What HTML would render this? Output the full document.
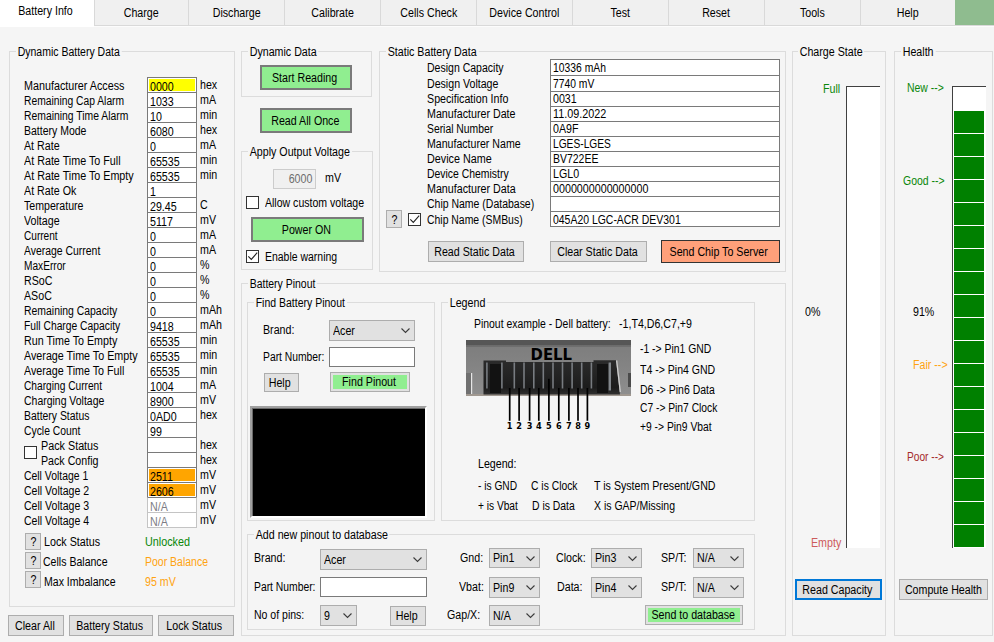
<!DOCTYPE html>
<html><head><meta charset="utf-8"><title>Battery Info</title>
<style>
html,body{margin:0;padding:0}
body{width:994px;height:642px;overflow:hidden;background:#f5f5f5;position:relative;font-family:"Liberation Sans",sans-serif;font-size:12.3px;color:#000}
body>*{position:absolute;box-sizing:content-box}
.t{line-height:13px;white-space:pre;font-size:12.3px;transform:scaleX(.867);transform-origin:0 50%}
.t.v{font-size:12.3px;transform:scaleX(.867)}
span{display:inline-block;white-space:nowrap}
.btn,.gbtn,.sbtn,.fbtn,.tab{white-space:nowrap}
.tab span,.btn span,.gbtn span,.sbtn span,.fbtn span{font-size:12.3px;transform:scaleX(.867)}
.cb span{font-size:12.3px;transform:scaleX(.867);transform-origin:0 50%}
.tbd span{transform:scaleX(.867);transform-origin:100% 50%}
.gt{background:#f5f5f5;padding:0 2px 0 2px}
.gb{border:1px solid #dcdcdc}
.tabbar{left:0;top:0;width:994px;height:26px;background:#f5f5f5}
.tab{background:#f0f0f0;border-left:1px solid #d9d9d9;border-bottom:1px solid #d9d9d9;text-align:center;line-height:26px;box-sizing:border-box}
.tab.sel{background:#fff;border:none;line-height:22px}
.tab.sel span{left:-2px;position:relative}
.tb{border:1px solid #7a7a7a;background:#fff}
.tbx{border:1px solid #7a7a7a;background:#fff}
.tbd{border:1px solid #ccc;background:#f0f0f0;color:#6d6d6d;text-align:right;padding-right:3px}
.btn{background:#e1e1e1;border:1px solid #adadad;box-sizing:border-box;text-align:center}
.btn span,.gbtn span,.sbtn span,.fbtn span{position:relative;top:0px;left:-1.5px}
.btn.q{background:#e1e1e1}
.btn.q span{left:0}
.btn.foc{border:2px solid #0078d7}
.btn.foc span{top:-1px}
.gbtn{background:#90ee90;border:2px solid #7a7a7a;box-sizing:border-box;text-align:center}
.gbtn span{top:-1px;left:-1px}
.fbtn span{top:-1px}
.sbtn{background:#ffa07a;border:1px solid #333;box-sizing:border-box;text-align:center}
.fbtn{background:#90ee90;border:1px solid #adadad;box-shadow:inset 0 0 0 2px #e1e1e1;box-sizing:border-box;text-align:center}
.cb{background:#e1e1e1;border:1px solid #adadad;box-sizing:border-box;padding-left:3px}
.cb span{position:relative;top:0px}
.cb svg{position:absolute;right:4px;top:7px}
.blk{background:#000;border:2px solid;border-color:#a0a0a0 #fff #fff #a0a0a0;box-shadow:inset 1px 1px 0 #696969}
.bar{background:#fff;border-top:1px solid #404040;border-left:1px solid #404040}
.ck{width:11px;height:11px;border:1px solid #333;background:#fff}
.ck svg{position:absolute;left:-1px;top:-1px}
</style></head>
<body>
<div class="tabbar"></div>
<div class="tab sel" style="left:0;top:0;width:94px;height:27px;"><span>Battery Info</span></div>
<div class="tab" style="left:94px;top:0;width:94px;height:26px;"><span>Charge</span></div>
<div class="tab" style="left:188px;top:0;width:96px;height:26px;"><span>Discharge</span></div>
<div class="tab" style="left:284px;top:0;width:96px;height:26px;"><span>Calibrate</span></div>
<div class="tab" style="left:380px;top:0;width:96px;height:26px;"><span>Cells Check</span></div>
<div class="tab" style="left:476px;top:0;width:96px;height:26px;"><span>Device Control</span></div>
<div class="tab" style="left:572px;top:0;width:96px;height:26px;"><span>Test</span></div>
<div class="tab" style="left:668px;top:0;width:96px;height:26px;"><span>Reset</span></div>
<div class="tab" style="left:764px;top:0;width:96px;height:26px;"><span>Tools</span></div>
<div class="tab" style="left:860px;top:0;width:95px;height:26px;"><span>Help</span></div>
<div style="left:955px;top:0;width:39px;height:25px;background:#8fbc8f;border-bottom:1px solid #d9d9d9"></div>
<div style="left:94px;top:26px;width:900px;height:1px;background:#fcfcfc"></div>
<div class="gb" style="left:9px;top:51px;width:224px;height:554px"></div>
<span class="t gt" style="left:16px;top:46px;transform:scaleX(0.853);">Dynamic Battery Data</span>
<span class="t " style="left:23.5px;top:80px;transform:scaleX(0.8752);">Manufacturer Access</span>
<div class="tb" style="left:147px;top:77px;width:48px;height:14px;border-color:#7a7a7a"></div>
<div style="left:149px;top:79px;width:46px;height:12px;background:#ffff00"></div>
<span class="t v" style="left:150px;top:81px;">0000</span>
<span class="t " style="left:200px;top:79px;">hex</span>
<span class="t " style="left:23.5px;top:95px;transform:scaleX(0.8369);">Remaining Cap Alarm</span>
<div class="tb" style="left:147px;top:92px;width:48px;height:14px;border-color:#7a7a7a"></div>
<span class="t v" style="left:150px;top:96px;">1033</span>
<span class="t " style="left:200px;top:94px;">mA</span>
<span class="t " style="left:23.5px;top:110px;transform:scaleX(0.8431);">Remaining Time Alarm</span>
<div class="tb" style="left:147px;top:107px;width:48px;height:14px;border-color:#7a7a7a"></div>
<span class="t v" style="left:150px;top:111px;">10</span>
<span class="t " style="left:200px;top:109px;">min</span>
<span class="t " style="left:23.5px;top:125px;transform:scaleX(0.8532);">Battery Mode</span>
<div class="tb" style="left:147px;top:122px;width:48px;height:14px;border-color:#7a7a7a"></div>
<span class="t v" style="left:150px;top:126px;">6080</span>
<span class="t " style="left:200px;top:124px;">hex</span>
<span class="t " style="left:23.5px;top:140px;transform:scaleX(0.8680);">At Rate</span>
<div class="tb" style="left:147px;top:137px;width:48px;height:14px;border-color:#7a7a7a"></div>
<span class="t v" style="left:150px;top:141px;">0</span>
<span class="t " style="left:200px;top:139px;">mA</span>
<span class="t " style="left:23.5px;top:155px;transform:scaleX(0.8742);">At Rate Time To Full</span>
<div class="tb" style="left:147px;top:152px;width:48px;height:14px;border-color:#7a7a7a"></div>
<span class="t v" style="left:150px;top:156px;">65535</span>
<span class="t " style="left:200px;top:154px;">min</span>
<span class="t " style="left:23.5px;top:170px;transform:scaleX(0.8739);">At Rate Time To Empty</span>
<div class="tb" style="left:147px;top:167px;width:48px;height:14px;border-color:#7a7a7a"></div>
<span class="t v" style="left:150px;top:171px;">65535</span>
<span class="t " style="left:200px;top:169px;">min</span>
<span class="t " style="left:23.5px;top:185px;transform:scaleX(0.8696);">At Rate Ok</span>
<div class="tb" style="left:147px;top:182px;width:48px;height:14px;border-color:#7a7a7a"></div>
<span class="t v" style="left:150px;top:186px;">1</span>
<span class="t " style="left:23.5px;top:200px;transform:scaleX(0.8617);">Temperature</span>
<div class="tb" style="left:147px;top:197px;width:48px;height:14px;border-color:#7a7a7a"></div>
<span class="t v" style="left:150px;top:201px;">29.45</span>
<span class="t " style="left:200px;top:199px;">C</span>
<span class="t " style="left:23.5px;top:215px;transform:scaleX(0.8676);">Voltage</span>
<div class="tb" style="left:147px;top:212px;width:48px;height:14px;border-color:#7a7a7a"></div>
<span class="t v" style="left:150px;top:216px;">5117</span>
<span class="t " style="left:200px;top:214px;">mV</span>
<span class="t " style="left:23.5px;top:230px;transform:scaleX(0.8200);">Current</span>
<div class="tb" style="left:147px;top:227px;width:48px;height:14px;border-color:#7a7a7a"></div>
<span class="t v" style="left:150px;top:231px;">0</span>
<span class="t " style="left:200px;top:229px;">mA</span>
<span class="t " style="left:23.5px;top:245px;transform:scaleX(0.8478);">Average Current</span>
<div class="tb" style="left:147px;top:242px;width:48px;height:14px;border-color:#7a7a7a"></div>
<span class="t v" style="left:150px;top:246px;">0</span>
<span class="t " style="left:200px;top:244px;">mA</span>
<span class="t " style="left:23.5px;top:260px;transform:scaleX(0.8247);">MaxError</span>
<div class="tb" style="left:147px;top:257px;width:48px;height:14px;border-color:#7a7a7a"></div>
<span class="t v" style="left:150px;top:261px;">0</span>
<span class="t " style="left:200px;top:259px;">%</span>
<span class="t " style="left:23.5px;top:275px;">RSoC</span>
<div class="tb" style="left:147px;top:272px;width:48px;height:14px;border-color:#7a7a7a"></div>
<span class="t v" style="left:150px;top:276px;">0</span>
<span class="t " style="left:200px;top:274px;">%</span>
<span class="t " style="left:23.5px;top:290px;">ASoC</span>
<div class="tb" style="left:147px;top:287px;width:48px;height:14px;border-color:#7a7a7a"></div>
<span class="t v" style="left:150px;top:291px;">0</span>
<span class="t " style="left:200px;top:289px;">%</span>
<span class="t " style="left:23.5px;top:305px;transform:scaleX(0.8478);">Remaining Capacity</span>
<div class="tb" style="left:147px;top:302px;width:48px;height:14px;border-color:#7a7a7a"></div>
<span class="t v" style="left:150px;top:306px;">0</span>
<span class="t " style="left:200px;top:304px;">mAh</span>
<span class="t " style="left:23.5px;top:320px;transform:scaleX(0.8378);">Full Charge Capacity</span>
<div class="tb" style="left:147px;top:317px;width:48px;height:14px;border-color:#7a7a7a"></div>
<span class="t v" style="left:150px;top:321px;">9418</span>
<span class="t " style="left:200px;top:319px;">mAh</span>
<span class="t " style="left:23.5px;top:335px;transform:scaleX(0.8713);">Run Time To Empty</span>
<div class="tb" style="left:147px;top:332px;width:48px;height:14px;border-color:#7a7a7a"></div>
<span class="t v" style="left:150px;top:336px;">65535</span>
<span class="t " style="left:200px;top:334px;">min</span>
<span class="t " style="left:23.5px;top:350px;transform:scaleX(0.8732);">Average Time To Empty</span>
<div class="tb" style="left:147px;top:347px;width:48px;height:14px;border-color:#7a7a7a"></div>
<span class="t v" style="left:150px;top:351px;">65535</span>
<span class="t " style="left:200px;top:349px;">min</span>
<span class="t " style="left:23.5px;top:365px;transform:scaleX(0.8717);">Average Time To Full</span>
<div class="tb" style="left:147px;top:362px;width:48px;height:14px;border-color:#7a7a7a"></div>
<span class="t v" style="left:150px;top:366px;">65535</span>
<span class="t " style="left:200px;top:364px;">min</span>
<span class="t " style="left:23.5px;top:380px;transform:scaleX(0.8280);">Charging Current</span>
<div class="tb" style="left:147px;top:377px;width:48px;height:14px;border-color:#7a7a7a"></div>
<span class="t v" style="left:150px;top:381px;">1004</span>
<span class="t " style="left:200px;top:379px;">mA</span>
<span class="t " style="left:23.5px;top:395px;transform:scaleX(0.8510);">Charging Voltage</span>
<div class="tb" style="left:147px;top:392px;width:48px;height:14px;border-color:#7a7a7a"></div>
<span class="t v" style="left:150px;top:396px;">8900</span>
<span class="t " style="left:200px;top:394px;">mV</span>
<span class="t " style="left:23.5px;top:410px;transform:scaleX(0.8468);">Battery Status</span>
<div class="tb" style="left:147px;top:407px;width:48px;height:14px;border-color:#7a7a7a"></div>
<span class="t v" style="left:150px;top:411px;">0AD0</span>
<span class="t " style="left:200px;top:409px;">hex</span>
<span class="t " style="left:23.5px;top:425px;transform:scaleX(0.8435);">Cycle Count</span>
<div class="tb" style="left:147px;top:422px;width:48px;height:14px;border-color:#7a7a7a"></div>
<span class="t v" style="left:150px;top:426px;">99</span>
<span class="t " style="left:40.5px;top:440px;transform:scaleX(0.8762);">Pack Status</span>
<div class="tb" style="left:147px;top:437px;width:48px;height:14px;border-color:#7a7a7a"></div>
<span class="t " style="left:200px;top:439px;">hex</span>
<span class="t " style="left:40.5px;top:455px;transform:scaleX(0.8671);">Pack Config</span>
<div class="tb" style="left:147px;top:452px;width:48px;height:14px;border-color:#7a7a7a"></div>
<span class="t " style="left:200px;top:454px;">hex</span>
<span class="t " style="left:23.5px;top:470px;transform:scaleX(0.8460);">Cell Voltage 1</span>
<div class="tb" style="left:147px;top:467px;width:48px;height:14px;border-color:#7a7a7a"></div>
<div style="left:149px;top:469px;width:46px;height:12px;background:#ffa500"></div>
<span class="t v" style="left:150px;top:471px;">2511</span>
<span class="t " style="left:200px;top:469px;">mV</span>
<span class="t " style="left:23.5px;top:485px;transform:scaleX(0.8578);">Cell Voltage 2</span>
<div class="tb" style="left:147px;top:482px;width:48px;height:14px;border-color:#7a7a7a"></div>
<div style="left:149px;top:484px;width:46px;height:12px;background:#ffa500"></div>
<span class="t v" style="left:150px;top:486px;">2606</span>
<span class="t " style="left:200px;top:484px;">mV</span>
<span class="t " style="left:23.5px;top:500px;transform:scaleX(0.8578);">Cell Voltage 3</span>
<div class="tb" style="left:147px;top:497px;width:48px;height:14px;border-color:#7a7a7a #c4c4c4 #c4c4c4"></div>
<span class="t v" style="left:150px;top:501px;color:#7c7c84;">N/A</span>
<span class="t " style="left:200px;top:499px;">mV</span>
<span class="t " style="left:23.5px;top:515px;transform:scaleX(0.8578);">Cell Voltage 4</span>
<div class="tb" style="left:147px;top:512px;width:48px;height:14px;border-color:#c4c4c4"></div>
<span class="t v" style="left:150px;top:516px;color:#7c7c84;">N/A</span>
<span class="t " style="left:200px;top:514px;">mV</span>
<div class="ck" style="left:24px;top:446px;"></div>
<div class="btn q" style="left:25px;top:533px;width:16px;height:17px;line-height:17px;"><span>?</span></div>
<span class="t " style="left:44px;top:536px;transform:scaleX(0.8729);">Lock Status</span>
<span class="t " style="left:145px;top:536px;color:#0a870a;transform:scaleX(0.8778);">Unlocked</span>
<div class="btn q" style="left:25px;top:552px;width:16px;height:17px;line-height:17px;"><span>?</span></div>
<span class="t " style="left:42.5px;top:556px;transform:scaleX(0.8579);">Cells Balance</span>
<span class="t " style="left:145px;top:556px;color:#ffa311;transform:scaleX(0.8532);">Poor Balance</span>
<div class="btn q" style="left:25px;top:571px;width:16px;height:17px;line-height:17px;"><span>?</span></div>
<span class="t " style="left:43.5px;top:576px;transform:scaleX(0.8574);">Max Imbalance</span>
<span class="t " style="left:145px;top:576px;color:#ffa311;">95 mV</span>
<div class="btn" style="left:8px;top:615px;width:56px;height:21px;line-height:21px;"><span>Clear All</span></div>
<div class="btn" style="left:69px;top:615px;width:84px;height:21px;line-height:21px;"><span>Battery Status</span></div>
<div class="btn" style="left:158px;top:615px;width:76px;height:21px;line-height:21px;"><span>Lock Status</span></div>
<div class="gb" style="left:241px;top:51px;width:129px;height:44px"></div>
<span class="t gt" style="left:248px;top:46px;">Dynamic Data</span>
<div class="gbtn" style="left:260px;top:65px;width:92px;height:25px;line-height:25px;"><span>Start Reading</span></div>
<div class="gbtn" style="left:260px;top:108px;width:92px;height:25px;line-height:25px;"><span>Read All Once</span></div>
<div class="gb" style="left:241px;top:151px;width:130px;height:117px"></div>
<span class="t gt" style="left:248px;top:146px;">Apply Output Voltage</span>
<div class="tbd" style="left:273px;top:169px;width:38px;height:18px;line-height:18px;"><span>6000</span></div>
<span class="t " style="left:325px;top:172px;">mV</span>
<div class="ck" style="left:246px;top:196px;"></div>
<span class="t " style="left:265px;top:197px;transform:scaleX(0.8570);">Allow custom voltage</span>
<div class="gbtn" style="left:251px;top:217px;width:113px;height:25px;line-height:25px;"><span>Power ON</span></div>
<div class="ck" style="left:246px;top:250px;"><svg width="13" height="13" viewBox="0 0 13 13"><path d="M2.3 6.3 L5.3 9.4 L11.2 2.7" fill="none" stroke="#222" stroke-width="1.1"/></svg></div>
<span class="t " style="left:265px;top:251px;transform:scaleX(0.8504);">Enable warning</span>
<div class="gb" style="left:379px;top:51px;width:405px;height:219px"></div>
<span class="t gt" style="left:386px;top:46px;">Static Battery Data</span>
<span class="t " style="left:426.5px;top:62px;transform:scaleX(0.8554);">Design Capacity</span>
<div class="tb" style="left:550px;top:59px;width:228px;height:15px;"></div>
<span class="t v" style="left:553px;top:62px;transform:scaleX(0.8409);">10336 mAh</span>
<span class="t " style="left:426.5px;top:78px;transform:scaleX(0.8630);">Design Voltage</span>
<div class="tb" style="left:550px;top:75px;width:228px;height:15px;"></div>
<span class="t v" style="left:553px;top:78px;transform:scaleX(0.8391);">7740 mV</span>
<span class="t " style="left:426.5px;top:93px;transform:scaleX(0.8691);">Specification Info</span>
<div class="tb" style="left:550px;top:91px;width:228px;height:14px;"></div>
<span class="t v" style="left:553px;top:93px;">0031</span>
<span class="t " style="left:426.5px;top:108px;transform:scaleX(0.8690);">Manufacturer Date</span>
<div class="tb" style="left:550px;top:106px;width:228px;height:14px;"></div>
<span class="t v" style="left:553px;top:108px;transform:scaleX(0.8789);">11.09.2022</span>
<span class="t " style="left:426.5px;top:123px;transform:scaleX(0.8423);">Serial Number</span>
<div class="tb" style="left:550px;top:121px;width:228px;height:14px;"></div>
<span class="t v" style="left:553px;top:123px;">0A9F</span>
<span class="t " style="left:426.5px;top:138px;transform:scaleX(0.8613);">Manufacturer Name</span>
<div class="tb" style="left:550px;top:136px;width:228px;height:14px;"></div>
<span class="t v" style="left:553px;top:138px;transform:scaleX(0.8305);">LGES-LGES</span>
<span class="t " style="left:426.5px;top:153px;transform:scaleX(0.8765);">Device Name</span>
<div class="tb" style="left:550px;top:151px;width:228px;height:14px;"></div>
<span class="t v" style="left:553px;top:153px;transform:scaleX(0.8513);">BV722EE</span>
<span class="t " style="left:426.5px;top:168px;transform:scaleX(0.8468);">Device Chemistry</span>
<div class="tb" style="left:550px;top:166px;width:228px;height:14px;"></div>
<span class="t v" style="left:553px;top:168px;">LGL0</span>
<span class="t " style="left:426.5px;top:183px;transform:scaleX(0.8700);">Manufacturer Data</span>
<div class="tb" style="left:550px;top:181px;width:228px;height:14px;"></div>
<span class="t v" style="left:553px;top:183px;transform:scaleX(0.8717);">0000000000000000</span>
<span class="t " style="left:426.5px;top:198px;transform:scaleX(0.8524);">Chip Name (Database)</span>
<div class="tb" style="left:550px;top:196px;width:228px;height:14px;"></div>
<span class="t " style="left:426.5px;top:214px;transform:scaleX(0.8479);">Chip Name (SMBus)</span>
<div class="tb" style="left:550px;top:211px;width:228px;height:14px;"></div>
<span class="t v" style="left:553px;top:214px;transform:scaleX(0.8492);">045A20 LGC-ACR DEV301</span>
<div class="btn q" style="left:386px;top:210px;width:16px;height:18px;line-height:18px;"><span>?</span></div>
<div class="ck" style="left:408px;top:213px;"><svg width="13" height="13" viewBox="0 0 13 13"><path d="M2.3 6.3 L5.3 9.4 L11.2 2.7" fill="none" stroke="#222" stroke-width="1.1"/></svg></div>
<div class="btn" style="left:428px;top:241px;width:96px;height:21px;line-height:21px;"><span>Read Static Data</span></div>
<div class="btn" style="left:550px;top:241px;width:97px;height:21px;line-height:21px;"><span>Clear Static Data</span></div>
<div class="sbtn" style="left:661px;top:240px;width:119px;height:23px;line-height:23px;"><span>Send Chip To Server</span></div>
<div class="gb" style="left:241px;top:283px;width:543px;height:351px"></div>
<span class="t gt" style="left:248px;top:278px;transform:scaleX(0.85);">Battery Pinout</span>
<div class="gb" style="left:247px;top:302px;width:186px;height:217px"></div>
<span class="t gt" style="left:254px;top:297px;transform:scaleX(0.853);">Find Battery Pinout</span>
<span class="t " style="left:263px;top:324px;">Brand:</span>
<div class="cb" style="left:329px;top:320px;width:86px;height:21px;line-height:21px;"><span style="top:0px">Acer</span><svg width="9" height="6" viewBox="0 0 9 6"><path d="M0.5 0.5 L4.5 4.5 L8.5 0.5" fill="none" stroke="#3c3c3c" stroke-width="1.1"/></svg></div>
<span class="t " style="left:263px;top:351px;transform:scaleX(0.8397);">Part Number:</span>
<div class="tbx" style="left:329px;top:347px;width:84px;height:18px;"></div>
<div class="btn" style="left:264px;top:373px;width:35px;height:19px;line-height:19px;"><span>Help</span></div>
<div class="fbtn" style="left:330px;top:372px;width:80px;height:20px;line-height:20px;text-indent:1px"><span>Find Pinout</span></div>
<div class="blk" style="left:250px;top:406px;width:173px;height:108px;"></div>
<div class="gb" style="left:441px;top:302px;width:312px;height:217px"></div>
<span class="t gt" style="left:448px;top:297px;">Legend</span>
<span class="t " style="left:474px;top:318px;transform:scaleX(0.8474);">Pinout example - Dell battery:</span>
<span class="t " style="left:619px;top:318px;transform:scaleX(0.8647);">-1,T4,D6,C7,+9</span>
<span class="t " style="left:640px;top:343px;transform:scaleX(0.8435);">-1 -&gt; Pin1 GND</span>
<span class="t " style="left:640px;top:364px;transform:scaleX(0.8562);">T4 -&gt; Pin4 GND</span>
<span class="t " style="left:640px;top:384px;transform:scaleX(0.8515);">D6 -&gt; Pin6 Data</span>
<span class="t " style="left:640px;top:402px;transform:scaleX(0.8347);">C7 -&gt; Pin7 Clock</span>
<span class="t " style="left:640px;top:421px;transform:scaleX(0.8377);">+9 -&gt; Pin9 Vbat</span>
<span class="t " style="left:478px;top:458px;transform:scaleX(0.8661);">Legend:</span>
<span class="t " style="left:478px;top:480px;transform:scaleX(0.8294);">- is GND</span>
<span class="t " style="left:531px;top:480px;transform:scaleX(0.8402);">C is Clock</span>
<span class="t " style="left:594px;top:480px;transform:scaleX(0.8645);">T is System Present/GND</span>
<span class="t " style="left:478px;top:500px;transform:scaleX(0.8257);">+ is Vbat</span>
<span class="t " style="left:532px;top:500px;transform:scaleX(0.8462);">D is Data</span>
<span class="t " style="left:594px;top:500px;transform:scaleX(0.8528);">X is GAP/Missing</span>
<svg class="dell" style="left:466px;top:340px" width="166" height="94" viewBox="0 0 166 94">
<defs><linearGradient id="pl" x1="0" y1="0" x2="0" y2="1"><stop offset="0" stop-color="#7c7c7c"/><stop offset="0.5" stop-color="#848484"/><stop offset="1" stop-color="#8f8f8f"/></linearGradient><linearGradient id="cn" x1="0" y1="0" x2="0" y2="1"><stop offset="0" stop-color="#2b2b2b"/><stop offset="0.8" stop-color="#1c1c1c"/><stop offset="1" stop-color="#303030"/></linearGradient></defs>
<rect x="0" y="0" width="165" height="56" fill="url(#pl)"/>
<rect x="0" y="0" width="165" height="5.5" fill="#565656"/>
<rect x="0" y="5.5" width="165" height="1.5" fill="#6e6e6e"/>
<rect x="0" y="33" width="5" height="21" fill="#707070"/><rect x="5" y="33" width="1.2" height="21" fill="#e6e6e6"/>
<rect x="162" y="33" width="3" height="14" fill="#4a4a4a"/>
<rect x="0" y="54" width="165" height="2" fill="#a09890"/>
<path d="M17.5 20.5 H40 V22 H127.5 V20.3 H150 L154 54.5 H17.5 Z" fill="url(#cn)"/>
<path d="M150 20.5 L151.3 20.5 L155 52 L153.7 52 Z" fill="#cfcfcf"/>
<rect x="24" y="24" width="11" height="29" fill="#121212"/><rect x="131" y="24" width="11" height="29" fill="#121212"/>
<rect x="20.1" y="22.5" width="1.6" height="26" fill="#878c92" opacity="0.85"/>
<rect x="35.1" y="22.5" width="1.6" height="26" fill="#878c92" opacity="0.85"/>
<rect x="47.5" y="22.5" width="1.6" height="26" fill="#878c92" opacity="0.85"/>
<rect x="57.2" y="22.5" width="1.6" height="26" fill="#878c92" opacity="0.85"/>
<rect x="67.0" y="22.5" width="1.6" height="26" fill="#878c92" opacity="0.85"/>
<rect x="76.5" y="22.5" width="1.6" height="26" fill="#878c92" opacity="0.85"/>
<rect x="86.2" y="22.5" width="1.6" height="26" fill="#878c92" opacity="0.85"/>
<rect x="95.7" y="22.5" width="1.6" height="26" fill="#878c92" opacity="0.85"/>
<rect x="105.3" y="22.5" width="1.6" height="26" fill="#878c92" opacity="0.85"/>
<rect x="114.9" y="22.5" width="1.6" height="26" fill="#878c92" opacity="0.85"/>
<rect x="124.6" y="22.5" width="1.6" height="26" fill="#878c92" opacity="0.85"/>
<rect x="142.6" y="22.5" width="2.4" height="28" fill="#8d9298" opacity="0.9"/>
<text x="85.3" y="19.7" text-anchor="middle" font-family="'DejaVu Sans','Liberation Sans',sans-serif" font-weight="bold" font-size="16.4px" fill="#000" textLength="41.5" lengthAdjust="spacingAndGlyphs">DELL</text>
<rect x="42.85" y="48" width="1.7" height="32.8" fill="#000"/>
<rect x="52.25" y="48" width="1.7" height="32.8" fill="#000"/>
<rect x="62.75" y="48" width="1.7" height="32.8" fill="#000"/>
<rect x="71.95" y="48" width="1.7" height="32.8" fill="#000"/>
<rect x="82.05" y="38.8" width="1.7" height="42.0" fill="#000"/>
<rect x="91.95" y="48" width="1.7" height="32.8" fill="#000"/>
<rect x="102.05" y="48" width="1.7" height="32.8" fill="#000"/>
<rect x="111.15" y="48" width="1.7" height="32.8" fill="#000"/>
<rect x="120.55" y="48" width="1.7" height="32.8" fill="#000"/>
<text x="43.7" y="89" text-anchor="middle" font-family="'DejaVu Sans','Liberation Sans',sans-serif" font-weight="bold" font-size="8.2px" fill="#000">1</text>
<text x="53.1" y="89" text-anchor="middle" font-family="'DejaVu Sans','Liberation Sans',sans-serif" font-weight="bold" font-size="8.2px" fill="#000">2</text>
<text x="63.6" y="89" text-anchor="middle" font-family="'DejaVu Sans','Liberation Sans',sans-serif" font-weight="bold" font-size="8.2px" fill="#000">3</text>
<text x="72.8" y="89" text-anchor="middle" font-family="'DejaVu Sans','Liberation Sans',sans-serif" font-weight="bold" font-size="8.2px" fill="#000">4</text>
<text x="82.9" y="89" text-anchor="middle" font-family="'DejaVu Sans','Liberation Sans',sans-serif" font-weight="bold" font-size="8.2px" fill="#000">5</text>
<text x="92.8" y="89" text-anchor="middle" font-family="'DejaVu Sans','Liberation Sans',sans-serif" font-weight="bold" font-size="8.2px" fill="#000">6</text>
<text x="102.9" y="89" text-anchor="middle" font-family="'DejaVu Sans','Liberation Sans',sans-serif" font-weight="bold" font-size="8.2px" fill="#000">7</text>
<text x="112.0" y="89" text-anchor="middle" font-family="'DejaVu Sans','Liberation Sans',sans-serif" font-weight="bold" font-size="8.2px" fill="#000">8</text>
<text x="121.4" y="89" text-anchor="middle" font-family="'DejaVu Sans','Liberation Sans',sans-serif" font-weight="bold" font-size="8.2px" fill="#000">9</text>
</svg>
<div class="gb" style="left:247px;top:534px;width:506px;height:94px"></div>
<span class="t gt" style="left:254px;top:529px;">Add new pinout to database</span>
<span class="t " style="left:254px;top:552px;">Brand:</span>
<div class="cb" style="left:320px;top:549px;width:107px;height:21px;line-height:21px;"><span style="top:0px">Acer</span><svg width="9" height="6" viewBox="0 0 9 6"><path d="M0.5 0.5 L4.5 4.5 L8.5 0.5" fill="none" stroke="#3c3c3c" stroke-width="1.1"/></svg></div>
<span class="t " style="left:254px;top:581px;transform:scaleX(0.8410);">Part Number:</span>
<div class="tbx" style="left:320px;top:577px;width:105px;height:18px;"></div>
<span class="t " style="left:254px;top:609px;transform:scaleX(0.8555);">No of pins:</span>
<div class="cb" style="left:320px;top:605px;width:37px;height:21px;line-height:21px;"><span style="top:0px">9</span><svg width="9" height="6" viewBox="0 0 9 6"><path d="M0.5 0.5 L4.5 4.5 L8.5 0.5" fill="none" stroke="#3c3c3c" stroke-width="1.1"/></svg></div>
<div class="btn" style="left:390px;top:606px;width:36px;height:20px;line-height:20px;line-height:18px"><span>Help</span></div>
<span class="t " style="left:460px;top:552px;">Gnd:</span>
<div class="cb" style="left:489px;top:548px;width:51px;height:20px;line-height:20px;"><span style="top:-1px">Pin1</span><svg width="9" height="6" viewBox="0 0 9 6"><path d="M0.5 0.5 L4.5 4.5 L8.5 0.5" fill="none" stroke="#3c3c3c" stroke-width="1.1"/></svg></div>
<span class="t " style="left:459px;top:581px;">Vbat:</span>
<div class="cb" style="left:489px;top:577px;width:51px;height:21px;line-height:21px;"><span style="top:0px">Pin9</span><svg width="9" height="6" viewBox="0 0 9 6"><path d="M0.5 0.5 L4.5 4.5 L8.5 0.5" fill="none" stroke="#3c3c3c" stroke-width="1.1"/></svg></div>
<span class="t " style="left:447px;top:609px;">Gap/X:</span>
<div class="cb" style="left:489px;top:605px;width:51px;height:21px;line-height:21px;"><span style="top:0px">N/A</span><svg width="9" height="6" viewBox="0 0 9 6"><path d="M0.5 0.5 L4.5 4.5 L8.5 0.5" fill="none" stroke="#3c3c3c" stroke-width="1.1"/></svg></div>
<span class="t " style="left:556px;top:552px;">Clock:</span>
<div class="cb" style="left:591px;top:548px;width:51px;height:20px;line-height:20px;"><span style="top:-1px">Pin3</span><svg width="9" height="6" viewBox="0 0 9 6"><path d="M0.5 0.5 L4.5 4.5 L8.5 0.5" fill="none" stroke="#3c3c3c" stroke-width="1.1"/></svg></div>
<span class="t " style="left:557px;top:581px;">Data:</span>
<div class="cb" style="left:591px;top:577px;width:51px;height:21px;line-height:21px;"><span style="top:0px">Pin4</span><svg width="9" height="6" viewBox="0 0 9 6"><path d="M0.5 0.5 L4.5 4.5 L8.5 0.5" fill="none" stroke="#3c3c3c" stroke-width="1.1"/></svg></div>
<span class="t " style="left:661px;top:552px;">SP/T:</span>
<div class="cb" style="left:693px;top:548px;width:51px;height:20px;line-height:20px;"><span style="top:-1px">N/A</span><svg width="9" height="6" viewBox="0 0 9 6"><path d="M0.5 0.5 L4.5 4.5 L8.5 0.5" fill="none" stroke="#3c3c3c" stroke-width="1.1"/></svg></div>
<span class="t " style="left:661px;top:581px;">SP/T:</span>
<div class="cb" style="left:693px;top:577px;width:51px;height:21px;line-height:21px;"><span style="top:0px">N/A</span><svg width="9" height="6" viewBox="0 0 9 6"><path d="M0.5 0.5 L4.5 4.5 L8.5 0.5" fill="none" stroke="#3c3c3c" stroke-width="1.1"/></svg></div>
<div class="fbtn" style="left:645px;top:605px;width:98px;height:20px;line-height:20px;"><span>Send to database</span></div>
<div class="gb" style="left:792px;top:51px;width:92px;height:583px"></div>
<span class="t gt" style="left:798px;top:46px;">Charge State</span>
<span class="t " style="left:823px;top:83px;color:#0a870a;">Full</span>
<span class="t " style="left:805px;top:306px;">0%</span>
<span class="t " style="left:811px;top:537px;color:#cd5c5c;">Empty</span>
<div class="bar" style="left:846px;top:86px;width:33px;height:461px;"></div>
<div class="btn foc" style="left:795px;top:579px;width:87px;height:21px;line-height:21px;"><span>Read Capacity</span></div>
<div class="gb" style="left:894px;top:51px;width:97px;height:583px"></div>
<span class="t gt" style="left:901px;top:46px;">Health</span>
<span class="t " style="left:907px;top:82px;color:#0a870a;transform:scaleX(0.8481);">New --&gt;</span>
<span class="t " style="left:903px;top:175px;color:#0a870a;transform:scaleX(0.8512);">Good --&gt;</span>
<span class="t " style="left:913px;top:306px;">91%</span>
<span class="t " style="left:913px;top:359px;color:#ffa311;">Fair --&gt;</span>
<span class="t " style="left:907px;top:451px;color:#a52a2a;transform:scaleX(0.8265);">Poor --&gt;</span>
<div class="bar" style="left:952px;top:86px;width:33px;height:461px;"></div>
<div style="left:954px;top:111px;width:30px;height:22px;background:#008000"></div>
<div style="left:954px;top:134px;width:30px;height:22px;background:#008000"></div>
<div style="left:954px;top:157px;width:30px;height:22px;background:#008000"></div>
<div style="left:954px;top:180px;width:30px;height:22px;background:#008000"></div>
<div style="left:954px;top:203px;width:30px;height:22px;background:#008000"></div>
<div style="left:954px;top:226px;width:30px;height:22px;background:#008000"></div>
<div style="left:954px;top:249px;width:30px;height:22px;background:#008000"></div>
<div style="left:954px;top:272px;width:30px;height:22px;background:#008000"></div>
<div style="left:954px;top:295px;width:30px;height:22px;background:#008000"></div>
<div style="left:954px;top:318px;width:30px;height:22px;background:#008000"></div>
<div style="left:954px;top:341px;width:30px;height:22px;background:#008000"></div>
<div style="left:954px;top:364px;width:30px;height:22px;background:#008000"></div>
<div style="left:954px;top:387px;width:30px;height:22px;background:#008000"></div>
<div style="left:954px;top:410px;width:30px;height:22px;background:#008000"></div>
<div style="left:954px;top:433px;width:30px;height:22px;background:#008000"></div>
<div style="left:954px;top:456px;width:30px;height:22px;background:#008000"></div>
<div style="left:954px;top:479px;width:30px;height:22px;background:#008000"></div>
<div style="left:954px;top:502px;width:30px;height:22px;background:#008000"></div>
<div style="left:954px;top:525px;width:30px;height:22px;background:#008000"></div>
<div class="btn" style="left:899px;top:579px;width:89px;height:21px;line-height:21px;"><span>Compute Health</span></div>
</body></html>
